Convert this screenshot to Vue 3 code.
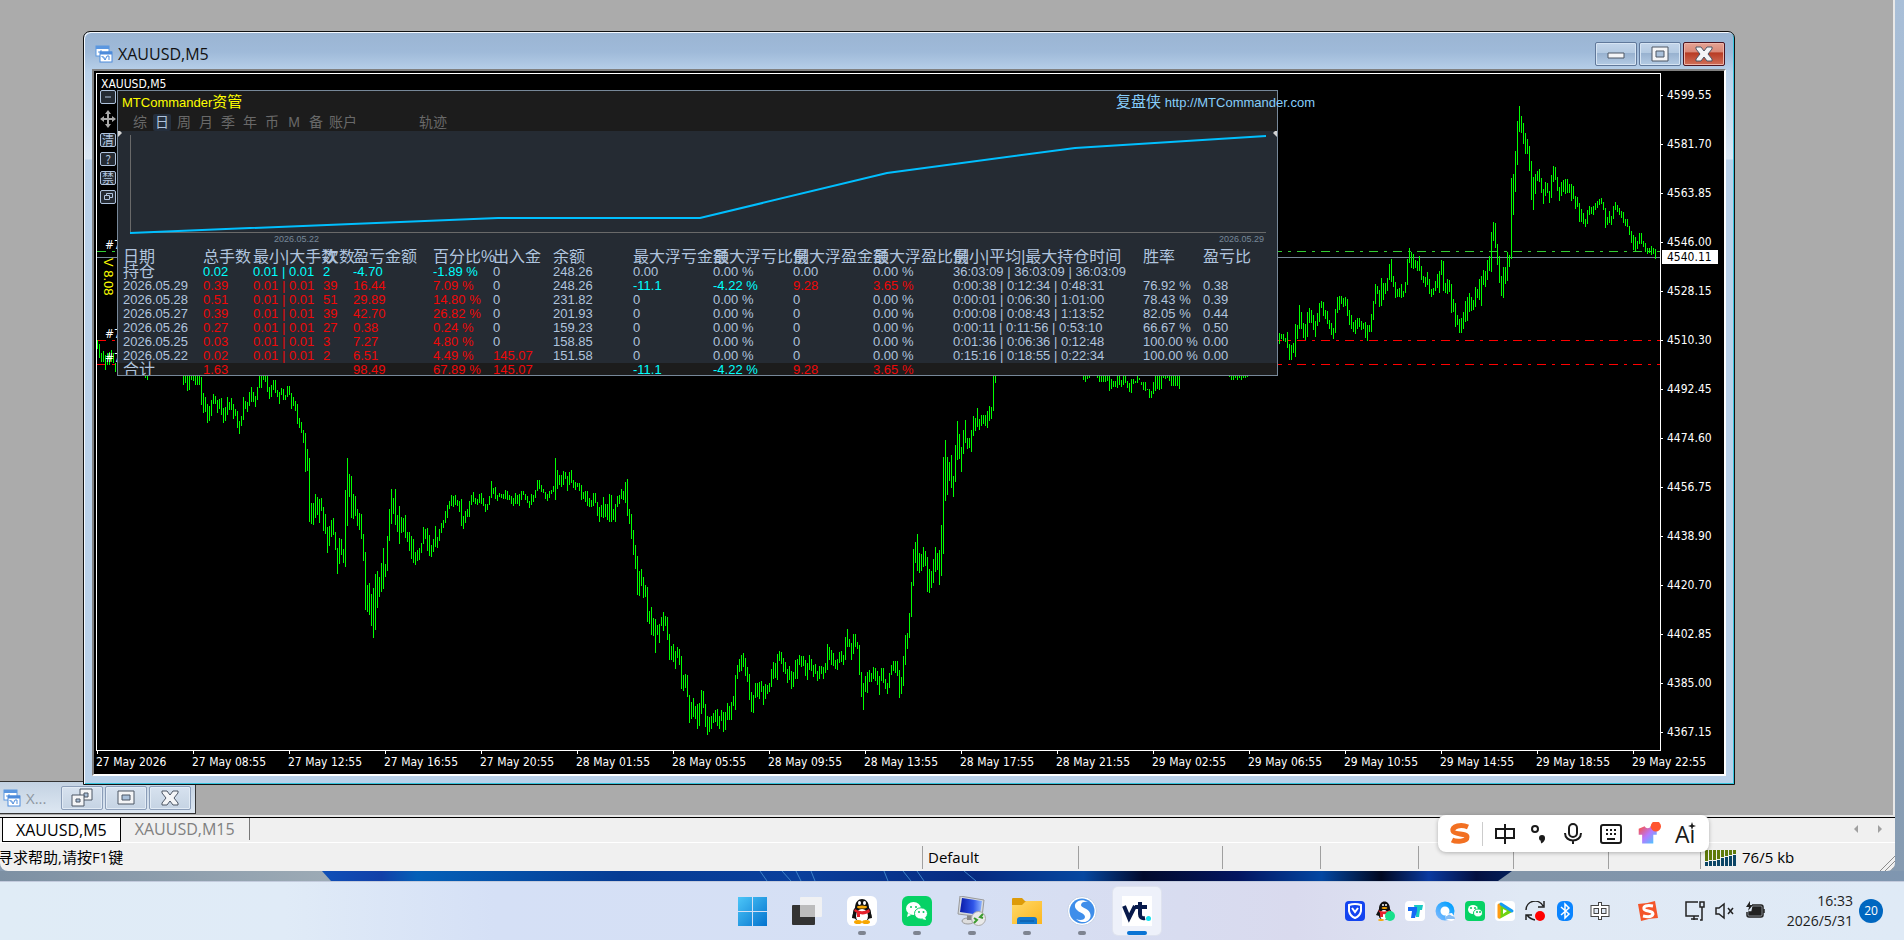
<script setup>
/* Bars are high/low pairs, one bar every two pixels, three units to a pixel measured down from "base". */
const series = [
  { x: 97, base: 25, bars: '945-972 958-1000 985-1010 978-1010 990-1036 985-1020 980-1020 975-1012 985-1015 1015-1040' },
  { x: 145, base: 370, bars: '15-24 15-30' },
  { x: 183, base: 370, bars: `15-44 15-38 15-62 15-60 15-30 15-32 15-44 15-44 15-44 22-104 68-128 82-126 102-158 108-152 90-138 72-102 78-102 90-128 87-116 84-134
114-158 112-154 82-134 96-120 84-120 102-146 116-138 122-174 152-191 138-168 82-150 93-116 96-126 66-108 52-96 66-96 78-110 52-90 15-54 15-54
15-30 15-36 15-66 50-86 44-80 30-60 30-68 60-80 66-102 54-74 57-90 75-90 48-80 48-74 68-116 82-108 93-122 102-161 144-174 156-188
180-218 190-306 237-303 264-456 399-461 399-465 372-444 380-435 388-459 384-423 411-483 432-492 471-549 468-528 450-501 444-495 486-540 534-612 504-582 507-555
537-579 360-591 264-468 312-381 318-444 372-447 378-438 417-468 429-480 432-507 492-573 546-720 645-726 639-735 672-768 654-804 612-780 603-714 621-681 579-666
534-657 582-621 498-603 417-513 357-462 384-432 357-465 435-486 408-522 441-489 444-486 435-504 486-516 486-543 498-567 507-579 546-585 540-573 534-570 519-549
471-522 477-507 474-543 495-558 525-561 507-546 468-531 501-534 477-513 459-489 450-474 423-459 405-444 393-417 375-408 378-411 375-405 390-408 393-426 387-468
438-477 423-459 417-441 393-441 375-405 366-396 384-402 387-405 372-399 369-402 384-408 402-426 402-420 378-405 333-384 354-372 351-387 375-393 369-381 372-384
372-387 360-387 363-390 375-390 378-402 384-408 369-402 375-402 372-408 363-390 363-375 372-390 378-399 393-414 372-405 375-396 360-384 330-363 330-357 345-366
357-369 366-387 372-393 363-384 360-372 348-366 264-390 300-357 315-345 315-351 303-345 306-327 318-363 306-345 300-339 330-354 336-360 339-351 339-363 345-390
366-387 363-396 363-408 384-411 390-411 369-408 369-399 396-438 411-456 405-441 381-444 402-441 402-450 372-456 375-456 417-450 402-456 378-411 375-402 357-387
363-390 336-399 327-438 417-462 432-507 480-555 525-597 558-675 603-678 597-648 621-684 645-681 651-756 723-762 711-795 744-798 747-849 765-795 762-819 741-768
726-783 738-768 741-810 792-870 828-870 822-876 843-897 831-864 837-885 858-957 915-963 912-954 915-981 975-1059` },
  { x: 691, base: 370, bars: `996-1047 984-1041 1008-1047 1002-1077 999-1068 960-1032 963-1014 1002-1071 1038-1095 1041-1086 1038-1077 1029-1059 1020-1056 1017-1068 1038-1077 1020-1053 1026-1086 1026-1080 999-1050 1008-1050
996-1050 978-1008 915-1020 885-927 867-906 855-903 849-891 864-918 891-936 912-990 966-1026 975-1029 939-984 939-981 936-987 933-966 948-1005 942-987 945-972 939-966
897-951 876-927 879-924 852-930 843-873 846-882 864-906 876-912 897-939 888-930 903-957 906-951 870-927 867-927 855-885 858-891 858-888 870-918 879-930 855-900
867-903 885-921 882-912 903-933 888-927 888-912 891-927 879-909 822-900 831-870 840-885 849-888 870-897 867-900 846-879 843-876 855-885 801-870 777-831 807-831
819-870 792-852 792-831 816-837 825-915 906-981 939-1020 918-966 906-969 900-936 909-936 891-927 894-933 903-945 918-975 894-933 894-939 927-957 939-972 909-954
885-915 873-903 873-909 873-918 900-984 921-972 858-948 795-885 789-837 729-804 636-741 537-648 516-579 492-603 549-609 552-603 531-591 543-588 561-666 597-669
603-654 567-639 531-606 549-600 540-645 465-618 261-552 210-393 261-375 276-333 255-354 318-381 225-336 153-270 192-267 231-306 180-252 150-219 204-237 204-234
180-246 138-198 144-183 114-171 147-180 135-168 135-162 135-168 123-174 108-153 111-147 15-123 15-39` },
  { x: 1083, base: 370, bars: '15-30 15-36 15-27 15-24' },
  { x: 1097, base: 370, bars: `15-24 15-36 15-36 15-36 15-36 15-32 15-63 28-57 32-52 32-51 15-54 15-45 30-51 15-45 18-39 33-54 39-66 27-69 27-42 32-39
15-39 24-30 36-45 36-60 36-63 57-60 57-84 63-84 36-72 15-63 15-57 15-60 15-57 15-24 15-27 15-24 15-33 15-48 15-48 15-48 15-48 15-57` },
  { x: 1229, base: 370, bars: '15-21 15-29 15-30 15-24 15-30 15-24 15-30 15-24 15-24 15-21' },
  { x: 1279, base: 25, bars: `924-957 927-942 927-948 939-951 921-969 957-1005 960-1005 954-984 897-996 900-942 840-912 861-912 894-939 897-945 861-936 849-894 855-894 870-915 888-936 864-903
834-891 828-849 831-873 855-882 858-897 885-912 894-930 909-942 852-924 816-864 813-855 813-837 819-846 816-843 822-873 855-900 870-912 891-921 885-927 879-912
879-906 888-915 894-912 891-939 900-948 900-921 867-921 828-885 777-837 783-807 795-846 759-843 774-825 774-807 759-798 717-765 702-771 753-786 771-819 792-816
789-816 777-819 798-816 771-804 702-780 669-714 681-729 687-732 705-729 708-738 693-738 723-765 753-774 756-786 741-780 762-807 792-816 789-810 768-798 747-789
738-804 705-750 708-798 774-804 762-807 765-801 777-864 822-861 834-906 870-900 882-924 879-924 861-912 828-891 816-888 804-861 816-858 825-855 786-846 792-819
762-825 753-843 735-780 738-786 705-765 693-738 621-741 591-648 594-669 657-720 693-774 753-813 726-819 726-777 681-768 690-726 459-702 447-570 378-501 288-420
243-321 273-324 294-357 324-387 342-387 363-438 408-525 456-555 447-507 438-468 432-471 459-504 492-537 471-513 474-504 498-534 450-519 423-471 426-465 456-498
486-528 471-513 465-501 462-507 462-504 477-504 477-528 483-522 513-552 516-546 534-591 552-591 564-597 582-606 555-597 543-570 546-567 543-570 534-555 528-549
522-540 519-537 531-555 549-609 576-600 558-594 573-600 543-582 531-555 540-561 549-570 558-579 561-594 582-603 582-606 603-630 618-654 630-675 636-678 648-672
624-657 624-657 648-666 654-681 669-687 669-684 663-690 669-687 672-702` },
]
const barPath = series
  .map((s) =>
    s.bars
      .split(/\s+/)
      .map((b, i) => {
        const [hi, lo] = b.split('-').map((v) => s.base + Math.round(v / 3))
        return `M${s.x + i * 2} ${hi}h1V${lo}h-1z`
      })
      .join('')
  )
  .join('')

const prices = ['4599.55', '4581.70', '4563.85', '4546.00', '4528.15', '4510.30', '4492.45', '4474.60', '4456.75', '4438.90', '4420.70', '4402.85', '4385.00', '4367.15']
const times = ['27 May 2026', '27 May 08:55', '27 May 12:55', '27 May 16:55', '27 May 20:55', '28 May 01:55', '28 May 05:55', '28 May 09:55', '28 May 13:55', '28 May 17:55', '28 May 21:55', '29 May 02:55', '29 May 06:55', '29 May 10:55', '29 May 14:55', '29 May 18:55', '29 May 22:55']

const periods = ['综', '日', '周', '月', '季', '年', '币', 'M', '备', '账户']
const heads = ['日期', '总手数', '最小|大手数', '次数', '盈亏金额', '百分比%', '出入金', '余额', '最大浮亏金额', '最大浮亏比例', '最大浮盈金额', '最大浮盈比例', '最小|平均|最大持仓时间', '胜率', '盈亏比']
const rows = [
  ['持仓', 'c0.02', 'c0.01 | 0.01', 'c2', 'c-4.70', 'c-1.89 %', '0', '248.26', '0.00', '0.00 %', '0.00', '0.00 %', '36:03:09 | 36:03:09 | 36:03:09', '', ''],
  ['2026.05.29', 'r0.39', 'r0.01 | 0.01', 'r39', 'r16.44', 'r7.09 %', '0', '248.26', 'c-11.1', 'c-4.22 %', 'r9.28', 'r3.65 %', '0:00:38 | 0:12:34 | 0:48:31', '76.92 %', '0.38'],
  ['2026.05.28', 'r0.51', 'r0.01 | 0.01', 'r51', 'r29.89', 'r14.80 %', '0', '231.82', '0', '0.00 %', '0', '0.00 %', '0:00:01 | 0:06:30 | 1:01:00', '78.43 %', '0.39'],
  ['2026.05.27', 'r0.39', 'r0.01 | 0.01', 'r39', 'r42.70', 'r26.82 %', '0', '201.93', '0', '0.00 %', '0', '0.00 %', '0:00:08 | 0:08:43 | 1:13:52', '82.05 %', '0.44'],
  ['2026.05.26', 'r0.27', 'r0.01 | 0.01', 'r27', 'r0.38', 'r0.24 %', '0', '159.23', '0', '0.00 %', '0', '0.00 %', '0:00:11 | 0:11:56 | 0:53:10', '66.67 %', '0.50'],
  ['2026.05.25', 'r0.03', 'r0.01 | 0.01', 'r3', 'r7.27', 'r4.80 %', '0', '158.85', '0', '0.00 %', '0', '0.00 %', '0:01:36 | 0:06:36 | 0:12:48', '100.00 %', '0.00'],
  ['2026.05.22', 'r0.02', 'r0.01 | 0.01', 'r2', 'r6.51', 'r4.49 %', 'r145.07', '151.58', '0', '0.00 %', '0', '0.00 %', '0:15:16 | 0:18:55 | 0:22:34', '100.00 %', '0.00'],
]
const totals = ['合计', 'r1.63', '', '', 'r98.49', 'r67.89 %', 'r145.07', '', 'c-11.1', 'c-4.22 %', 'r9.28', 'r3.65 %', '', '', '']
const tone = (v) => ({ up: v[0] === 'r', down: v[0] === 'c' })
const plain = (v) => v.replace(/^[rc]/, '')
const signal = [11, 10, 10, 9, 7, 6, 5, 4]
</script>

<template>
  <div class="desktop">
    <main class="app">
      <section class="workspace">
        <div class="mini">
          <svg class="app-icon" viewBox="0 0 18 18"><rect x="1" y="1" width="13" height="10" fill="#fff" stroke="#5b97e0" /><path d="M1 2.500h13" stroke="#5b97e0" stroke-width="3" /><path d="M3 7h3V5M9 8h2" stroke="#5b97e0" fill="none" /><rect x="5" y="7" width="12" height="10" fill="#fff" stroke="#4d8bdb" /><path d="M5 8h12" stroke="#4d8bdb" stroke-width="3" /><path d="M7 11v1h2v2h1v1l2-4h2v4" stroke="#4d8bdb" fill="none" /></svg>
          <span class="mini-title">X...</span>
          <div class="wbtns">
            <button class="wbtn pale" aria-label="还原"><svg viewBox="0 0 24 20"><path d="M10 1h12v11H10z" class="glyph" /><path d="M14 5h4v4h-4z" class="hole" /><path d="M2 7h12v11H2z" class="glyph" /><path d="M6 11h4v3H6z" class="hole" /></svg></button>
            <button class="wbtn pale" aria-label="最大化"><svg viewBox="0 0 24 20"><path d="M4 3h16v13H4z" class="glyph" /><path d="M8 7h8v5H8z" class="hole" /></svg></button>
            <button class="wbtn pale" aria-label="关闭"><svg viewBox="0 0 24 20"><path d="M4 3h5l3 4 3-4h5v2l-4 5 4 5v2h-5l-3-4-3 4H4v-2l4-5-4-5z" class="glyph" /></svg></button>
          </div>
        </div>

        <article class="child">
          <header class="titlebar">
            <svg class="app-icon" viewBox="0 0 18 18"><rect x="1" y="1" width="13" height="10" fill="#fff" stroke="#5b97e0" /><path d="M1 2.500h13" stroke="#5b97e0" stroke-width="3" /><path d="M3 7h3V5M9 8h2" stroke="#5b97e0" fill="none" /><rect x="5" y="7" width="12" height="10" fill="#fff" stroke="#4d8bdb" /><path d="M5 8h12" stroke="#4d8bdb" stroke-width="3" /><path d="M7 11v1h2v2h1v1l2-4h2v4" stroke="#4d8bdb" fill="none" /></svg>
            <h1>XAUUSD,M5</h1>
            <div class="wbtns">
              <button class="wbtn" aria-label="最小化"><svg viewBox="0 0 24 20"><path d="M4 9h16v5H4z" class="glyph" /></svg></button>
              <button class="wbtn" aria-label="最大化"><svg viewBox="0 0 24 20"><path d="M4 3h16v14H4z" class="glyph" /><path d="M8 7h8v6H8z" class="hole" /></svg></button>
              <button class="wbtn close" aria-label="关闭"><svg viewBox="0 0 24 20"><path d="M4 3h5l3 4 3-4h5v2l-4 5 4 5v2h-5l-3-4-3 4H4v-2l4-5-4-5z" class="glyph" /></svg></button>
            </div>
          </header>

          <div class="chart">
            <div class="plot">
              <svg class="bars" viewBox="97 74 1563 676" preserveAspectRatio="none" shape-rendering="crispEdges">
                <path d="M97 257h1563v1H97z" fill="#778899" />
                <path d="M97 251.500h1563" class="dash buy" />
                <path d="M97 340.500h1563M97 364.500h1563" class="dash stop" />
                <path :d="barPath" fill="#00ff00" />
              </svg>
              <span class="symbol">XAUUSD,M5</span>
              <span class="order o1">#7</span>
              <span class="order o2">#7</span>
              <span class="order o3">#7</span>
              <span class="version">V 8.08</span>

              <div class="tools">
                <button class="tool" aria-label="收起"><svg viewBox="0 0 14 12"><path d="M4 6h6" stroke="#b0c4de" /></svg></button>
                <button class="tool move" aria-label="移动"><svg viewBox="0 0 16 18"><path d="M8 2v14M1 9h14" stroke="#a9a9a9" stroke-width="2" /><path d="M8 0l3 4H5zM8 18l3-4H5zM0 9l4-3v6zM16 9l-4-3v6z" fill="#a9a9a9" /></svg></button>
                <button class="tool">清</button>
                <button class="tool">?</button>
                <button class="tool">禁</button>
                <button class="tool" aria-label="窗口"><svg viewBox="0 0 14 12" fill="none" stroke="#b0c4de"><path d="M5.500 4V2.500h6v4H9M3.500 4.500h5v4h-5z" /></svg></button>
              </div>

              <section class="panel">
                <div class="panel-head">
                  <div class="brand-row">
                    <strong>MTCommander<span class="cjk">资管</span></strong>
                    <a href="http://MTCommander.com"><span class="cjk">复盘侠</span> http://MTCommander.com</a>
                  </div>
                  <nav class="periods">
                    <button v-for="p in periods" :key="p" :class="{ on: p === '日' }">{{ p }}</button>
                    <button class="track">轨迹</button>
                  </nav>
                </div>
                <svg class="equity" viewBox="118 131 1159 105" preserveAspectRatio="none">
                  <path d="M130 135h1v98h-1zM130 232h1136v1H130z" fill="#696969" shape-rendering="crispEdges" />
                  <path d="M130 233L498 218H700L887 173L1075 148L1266 136" fill="none" stroke="#00bfff" stroke-width="2" />
                  <path d="M118 129l4 4-4 4zM1277 129l-4 4 4 4z" fill="#d3d3d3" />
                </svg>
                <div class="dates"><span>2026.05.22</span><span>2026.05.29</span></div>
                <div class="grid">
                  <table>
                    <colgroup><col v-for="n in 15" :key="n" :class="'c' + n" /></colgroup>
                    <thead><tr><th v-for="h in heads" :key="h">{{ h }}</th></tr></thead>
                    <tbody><tr v-for="r in rows" :key="r[0]"><td v-for="(v, i) in r" :key="i" :class="tone(v)">{{ plain(v) }}</td></tr></tbody>
                    <tfoot><tr><td v-for="(v, i) in totals" :key="i" :class="tone(v)">{{ plain(v) }}</td></tr></tfoot>
                  </table>
                </div>
              </section>
            </div>
            <div class="prices"><span v-for="p in prices" :key="p">{{ p }}</span></div>
            <div class="times"><span v-for="t in times" :key="t">{{ t }}</span></div>
            <span class="current">4540.11</span>
          </div>
        </article>
      </section>

      <nav class="tabs">
        <button class="tab on">XAUUSD,M5</button>
        <button class="tab">XAUUSD,M15</button>
        <span class="arrows"><button aria-label="向左"><svg viewBox="0 0 6 10"><path d="M5 1v8L1 5z" fill="#a0a0a0" /></svg></button><button aria-label="向右"><svg viewBox="0 0 6 10"><path d="M1 1v8l4-4z" fill="#a0a0a0" /></svg></button></span>
      </nav>

      <footer class="status">
        <span class="help">寻求帮助,请按F1键</span>
        <span class="s1">Default</span><span class="s2"></span><span class="s3"></span><span class="s3"></span><span class="s4"></span><span class="s4"></span><span class="s5"></span>
        <span class="net">
          <svg class="signal" viewBox="0 0 32 16" shape-rendering="crispEdges"><template v-for="(g, i) in signal" :key="i"><rect :x="i * 4" y="0" width="3" :height="g" fill="#5f7a0b" /><rect :x="i * 4" :y="g + 1" width="3" :height="15 - g" fill="#0b4566" /></template></svg>
          76/5 kb
        </span>
        <svg class="grip" viewBox="0 0 16 16" stroke="#8c8c8c"><path d="M1 16L16 1M6 16L16 6M11 16l5-5" /></svg>
      </footer>
    </main>

    <div class="ime">
      <svg class="ime-s" viewBox="0 0 24 22"><path d="M20 4C13 1 4 3 5 8c1 4 14 2 14 6 0 5-11 5-15 3" fill="none" stroke="#f27022" stroke-width="5" /></svg>
      <i></i>
      <svg viewBox="0 0 24 24" class="pen"><path d="M3 7h18v9H3zM12 2v20" /></svg>
      <svg viewBox="0 0 24 24" class="pen punct"><circle cx="8" cy="7" r="3" /><circle cx="15" cy="16" r="2" fill="#1a1a1a" /><path d="M16.500 16c.5 2-.5 3.500-2.500 4.500" /></svg>
      <svg viewBox="0 0 24 24" class="pen"><rect x="8" y="2" width="8" height="13" rx="4" /><path d="M4 11c0 10 16 10 16 0M12 19v3" /></svg>
      <svg viewBox="0 0 24 24" class="pen wide"><rect x="2" y="3" width="20" height="18" rx="2" /><path d="M7 8h2M11 8h2M15 8h2M7 12h2M11 12h2M15 12h2M8 17h8" /></svg>
      <svg viewBox="0 0 28 28" class="wide"><defs><linearGradient id="shirt" x1="0" y1="0" x2="1" y2="1"><stop offset="0" stop-color="#ff4f3a" /><stop offset=".5" stop-color="#b678ff" /><stop offset="1" stop-color="#35d6ff" /></linearGradient></defs><path d="M2 8l7-3c1 3 6 3 7 0l7 3v7h-4v10H6V15H2z" fill="url(#shirt)" /><circle cx="22" cy="5" r="6" fill="#ff5530" /></svg>
      <span class="ai wide">Ai<svg viewBox="0 0 8 8"><path d="M4 0l1 3 3 1-3 1-1 3-1-3-3-1 3-1z" fill="#1a1a1a" /></svg></span>
    </div>

    <svg class="wallpaper" viewBox="0 0 1904 10" preserveAspectRatio="none">
      <defs>
        <linearGradient id="blue"><stop offset="0" stop-color="#0f50b8" /><stop offset=".05" stop-color="#1240a8" /><stop offset=".08" stop-color="#0460b8" /><stop offset=".25" stop-color="#063c94" /><stop offset=".4" stop-color="#0a3f9c" /><stop offset=".55" stop-color="#062a80" /><stop offset=".64" stop-color="#0648a0" /><stop offset=".69" stop-color="#020a2c" /><stop offset=".77" stop-color="#031560" /><stop offset=".84" stop-color="#0347a2" /><stop offset=".89" stop-color="#010820" /><stop offset=".93" stop-color="#0a3aa0" /><stop offset=".97" stop-color="#041040" /><stop offset="1" stop-color="#031f5a" /></linearGradient>
        <linearGradient id="sky"><stop offset="0" stop-color="#7d90a3" /><stop offset=".17" stop-color="#9caab5" /><stop offset=".8" stop-color="#8295a9" /><stop offset="1" stop-color="#7f96b0" /></linearGradient>
      </defs>
      <path d="M0 0h1904v10H0z" fill="url(#sky)" />
      <path d="M322 0H1512L1498 10H331z" fill="url(#blue)" />
      <path d="M760 0l7 10M782 0l9 10M796 0l5 10M811 0l4 10M884 0l4 10M903 0l8 10M917 0l7 10M964 0l12 10" stroke="#3f83c8" fill="none" />
    </svg>

    <div class="taskbar">
      <div class="pinned">
        <button aria-label="开始"><svg viewBox="0 0 30 30"><defs><linearGradient id="win" x1="0" y1="0" x2="1" y2="1"><stop offset="0" stop-color="#4cc6f8" /><stop offset="1" stop-color="#0473ce" /></linearGradient></defs><path d="M1 1h14v14H1zM16 1h14v14H16zM1 16h14v14H1zM16 16h14v14H16z" fill="url(#win)" /></svg></button>
        <button aria-label="任务视图"><svg viewBox="0 0 30 30"><rect x="0" y="9" width="23" height="20" rx="1" fill="#333" /><rect x="8" y="1" width="22" height="20" rx="1" fill="#f3f3f3" opacity=".9" /><path d="M8 9h15v12H8z" fill="#bcbcbc" /></svg></button>
        <button class="run" aria-label="QQ"><svg viewBox="0 0 30 30"><rect width="30" height="30" rx="6" fill="#fff" /><ellipse cx="15" cy="17" rx="9" ry="9" fill="#111" /><path d="M8 12C8 0 22 0 22 12v4H8z" fill="#111" /><path d="M5 22c0-4 2-7 3-8l2 9zM25 22c0-4-2-7-3-8l-2 9z" fill="#111" /><ellipse cx="15" cy="20" rx="6" ry="7" fill="#fff" /><ellipse cx="11" cy="26" rx="4" ry="2" fill="#f7a600" /><ellipse cx="19" cy="26" rx="4" ry="2" fill="#f7a600" /><path d="M8 13c5 3 9 3 14 0l1 3c-3 2-7 3-10 2v3h-3v-4l-3-2z" fill="#e6212c" /><ellipse cx="12.500" cy="7" rx="1.500" ry="2" fill="#fff" /><ellipse cx="17.500" cy="7" rx="1.500" ry="2" fill="#fff" /><ellipse cx="15" cy="11" rx="5" ry="1.500" fill="#f7a600" /></svg></button>
        <button class="run" aria-label="微信"><svg viewBox="0 0 30 30"><rect width="30" height="30" rx="6" fill="#06d265" /><ellipse cx="11.500" cy="12.500" rx="7.500" ry="6.500" fill="#fff" /><path d="M6 17l-1 4 4-2z" fill="#fff" /><ellipse cx="19" cy="17.500" rx="6.500" ry="5.700" fill="#fff" stroke="#06d265" /><path d="M23 21l1 3-4-1z" fill="#fff" /><g fill="#06c75f"><circle cx="9" cy="11" r="1" /><circle cx="14" cy="11" r="1" /><circle cx="17" cy="16" r="1" /><circle cx="21.500" cy="16" r="1" /></g></svg></button>
        <button class="run" aria-label="远程桌面"><svg viewBox="0 0 30 30"><defs><linearGradient id="mon" x1="0" x2="1"><stop offset="0" stop-color="#0a1ba8" /><stop offset=".6" stop-color="#2f55e8" /><stop offset="1" stop-color="#8db4ff" /></linearGradient></defs><ellipse cx="11" cy="25" rx="6" ry="3" fill="#ddd" stroke="#999" /><path d="M10 18h5v6h-5z" fill="#888" /><path d="M3 0l24 4-2 17L1 18z" fill="#d5d9de" stroke="#999" /><path d="M5 2l20 3-2 14L3 16z" fill="url(#mon)" /><circle cx="21.500" cy="22.500" r="7" fill="#e9e9e9" stroke="#aaa" /><path d="M17 22l3 2-3 3M26 18l-3 3 3 1" stroke="#3b9b2f" stroke-width="2" fill="none" /></svg></button>
        <button class="run" aria-label="文件资源管理器"><svg viewBox="0 0 30 30"><defs><linearGradient id="fold" x1="0" y1="0" x2="1" y2="1"><stop offset="0" stop-color="#ffd968" /><stop offset="1" stop-color="#fcb61f" /></linearGradient></defs><path d="M0 3c0-1 1-1 1-1h9l3 3h17v8H0z" fill="#dd9b09" /><path d="M0 9h10l4-4h16v23H0z" fill="url(#fold)" /><path d="M5 28v-4q0-3 3-3h14q3 0 3 3v4z" fill="#1379cf" /><path d="M8 25h14" stroke="#0a549d" /></svg></button>
        <button class="run" aria-label="搜狗浏览器"><svg viewBox="0 0 30 30"><circle cx="15" cy="15" r="14.500" fill="#fff" stroke="#c9d3e6" /><circle cx="15" cy="15" r="12.500" fill="#3f8eea" /><path d="M21 6C13 1 5 7 9 13c3 4 9 4 9 8 0 3-5 4-9 2 8 7 17 1 14-6-2-5-9-5-9-8 0-3 4-4 7-3z" fill="#fff" /></svg></button>
        <button class="run on" aria-label="vt"><svg viewBox="0 0 30 30"><rect width="30" height="30" fill="#fff" /><path d="M2 10l5 12 6-12" fill="none" stroke="#081a4b" stroke-width="4" /><path d="M18 6v12q0 5 5 4M13 11h12" fill="none" stroke="#081a4b" stroke-width="4" /><circle cx="26.500" cy="22.500" r="2.500" fill="#16e0ee" /></svg></button>
      </div>

      <div class="tray">
        <svg viewBox="0 0 20 20"><rect width="20" height="20" rx="4" fill="#1444f0" /><path d="M4 4q6-2 12 0v6q-1 5-6 7-5-2-6-7z" fill="none" stroke="#fff" stroke-width="2" /><path d="M7 7l3 4 3-4" fill="none" stroke="#fff" stroke-width="2" /></svg>
        <svg viewBox="0 0 20 20"><path d="M4 8C4-2 15-2 15 8l3 6-3 1c0 5-11 5-11 0l-3-1z" fill="#111" /><ellipse cx="9" cy="14" rx="4" ry="5" fill="#fff" /><ellipse cx="6" cy="19" rx="3" ry="1" fill="#f7a600" /><path d="M3 9c4 2 8 2 12 0v3q-5 2-7 1v3H5v-4z" fill="#e6212c" /><circle cx="8" cy="4" r="1" fill="#fff" /><circle cx="11" cy="4" r="1" fill="#fff" /><ellipse cx="9.500" cy="7" rx="3" ry="1" fill="#f7a600" /><circle cx="15" cy="15" r="5" fill="#17e08b" /></svg>
        <svg viewBox="0 0 20 20"><rect width="20" height="20" rx="4" fill="#fff" /><path d="M9 4h9l-1 5h-2l-1 7h-3z" fill="#17c9c4" /><path d="M3 6h9v4l-2 7H6l1-7H3z" fill="#1668f5" /></svg>
        <svg viewBox="0 0 20 20"><defs><linearGradient id="ring" x1="0" y1="1" x2="1" y2="0"><stop offset="0" stop-color="#74b7ff" /><stop offset="1" stop-color="#00a0ff" /></linearGradient></defs><circle cx="10" cy="10" r="7" fill="#fff" stroke="url(#ring)" stroke-width="5" /><path d="M11 13l6-1 3 5q-1 3-4 3l-6-2z" fill="#fff" /><path d="M12 15q2-3 5 0 3 0 3 3H10q0-3 2-3z" fill="#85bdf5" /></svg>
        <svg viewBox="0 0 20 20"><rect width="20" height="20" rx="4" fill="#06d265" /><ellipse cx="8" cy="8.500" rx="5" ry="4.500" fill="#fff" /><ellipse cx="13" cy="12" rx="4.500" ry="4" fill="#fff" stroke="#06d265" /><g fill="#06c75f"><circle cx="6" cy="7" r="1" /><circle cx="10" cy="7" r="1" /><circle cx="12" cy="11" r="1" /><circle cx="15" cy="11" r="1" /></g></svg>
        <svg viewBox="0 0 20 20"><rect width="20" height="20" rx="4" fill="#fff" /><path d="M5 4l11 6-11 6z" fill="#6fd313" stroke="#6fd313" stroke-width="3" stroke-linejoin="round" /><path d="M4 4v12" stroke="#ff9b12" stroke-width="3" stroke-linecap="round" /><path d="M6 3l11 7" stroke="#159cf5" stroke-width="3" stroke-linecap="round" /><path d="M8 8l4 2-4 3z" fill="#fff" /></svg>
        <svg viewBox="0 0 20 20" class="thin"><path d="M1 9A9 9 0 0 1 18 5M19 0v6h-6M1 19v-5h6M2 14q3 4 8 5" /><circle cx="15" cy="15" r="5" fill="#f00" stroke="none" /></svg>
        <svg viewBox="0 0 20 20"><rect x="2" width="16" height="20" rx="6" fill="#0a84ff" /><path d="M6 6l8 7-4 4V3l4 4-8 7" fill="none" stroke="#fff" stroke-width="1.500" /></svg>
        <svg viewBox="0 0 20 20" class="zh"><path d="M2.500 6h15v8h-15zM10 1v18" stroke="#444" stroke-width="4" /><path d="M2.500 6h15v8h-15zM10 2v16" stroke="#fff" stroke-width="2" /></svg>
        <svg viewBox="0 0 20 20" class="sogou"><path d="M0 3q8 0 17-3l3 17q-8 0-17 3z" fill="#f4552a" /><path d="M15 5C9 4 5 5 6 8s9 1 9 5c-1 3-6 3-10 2" fill="none" stroke="#fff" stroke-width="3" /></svg>
        <svg viewBox="0 0 20 20" class="thin net-icon"><path d="M13 1H1v14h13M6 18h7M9 15v4M15 1h4v5h-4zM17 6v13h-2" /></svg>
        <svg viewBox="0 0 20 20" class="thin snd"><path d="M1 7h3l5-4v14l-5-4H1zM13 7l5 6M18 7l-5 6" /></svg>
        <svg viewBox="0 0 20 20" class="thin bat"><path d="M7 4h9q2 0 2 2v8q0 2-2 2H4q-2 0-2-2v-3" /><path d="M8 6h8v8H4v-3h3z" fill="#222" /><path d="M19 8v4" /><path d="M5 0L1 6h3l-1 4 5-6H5z" fill="#222" stroke="none" /></svg>
        <div class="clock"><span>16:33</span><span>2026/5/31</span></div>
        <span class="badge">20</span>
      </div>
    </div>
  </div>
</template>

<style>
body { margin: 0; overflow: hidden; }
</style>

<style scoped>
* { box-sizing: border-box; }
button { font: inherit; color: inherit; padding: 0; border: 0; background: none; }
svg { display: block; flex: none; }
.desktop { position: relative; display: flex; flex-direction: column; height: 100vh; background: linear-gradient(#a9bfd8, #8398ae); font-family: "Open Sans", "Noto Sans CJK SC", sans-serif; font-size: 15px; color: #000; }
.app { flex: 1; min-height: 0; display: flex; flex-direction: column; margin-right: 9px; background: #f0f0f0; border-radius: 0 0 8px 8px; overflow: hidden; }
.workspace { position: relative; flex: 1; min-height: 0; background: #ababab; border-right: 2px solid #e8e8e8; }

.child { position: absolute; left: 83px; top: 31px; right: 158px; bottom: 32px; display: flex; flex-direction: column; padding: 0 8px 8px; border: 1px solid #111; border-radius: 7px 7px 0 0; background: linear-gradient(#9ab4d2 0, #9fbad9 20px, #b9d1ea 40px, #dae7f4 127px, #b9d1ea 128px); box-shadow: inset 1px 1px 0 #f4f9ff, inset -1px -1px 0 #35c5de; }
.titlebar { flex: none; display: flex; align-items: center; height: 37px; padding: 0 1px 0 3px; }
.app-icon { width: 18px; height: 18px; }
h1 { margin: 0 0 0 5px; font-size: 16px; line-height: 20px; font-weight: 400; color: #111; }
.titlebar h1 { padding-top: 6px; }
.titlebar .app-icon { margin-top: 6px; }
.wbtns { display: flex; gap: 2px; margin-left: auto; }
.wbtn { display: flex; align-items: center; justify-content: center; width: 42px; height: 24px; border: 1px solid #60789a; border-radius: 2px; background: linear-gradient(#c3d5ea 0, #b3c9e1 45%, #97b1cf 46%, #b4cbe4 100%); box-shadow: inset 0 0 0 1px #d6e4f3; }
.titlebar .wbtn { margin-top: 6px; }
.wbtn svg { width: 24px; height: 20px; }
.wbtn.close { border-color: #4d1520; background: linear-gradient(#e5a394 0, #d98877 42%, #b73a22 44%, #d0705a 100%); box-shadow: inset 0 0 0 1px #eeb4a8; }
.wbtn.pale { border-color: #8b9db8; background: linear-gradient(#d7e2ef, #c5d3e3); box-shadow: inset 0 0 0 1px #e2ebf5; }
.glyph { fill: #f4f5f7; stroke: #4d5665; }
.hole { fill: #a9c0da; stroke: #4d5665; }

.mini { position: absolute; left: 0; bottom: 3px; display: flex; align-items: center; width: 196px; height: 33px; padding: 0 4px 0 3px; background: linear-gradient(#c3d2e2, #dde7f2); border: solid #333; border-width: 1px 1px 1px 0; }
.mini-title { margin-left: 5px; font-size: 15px; color: #8d969f; }

.chart { position: relative; flex: 1; min-height: 0; display: grid; grid-template-columns: minmax(0, 1fr) 63px; grid-template-rows: minmax(0, 1fr) 23px; padding: 2px 0 0 2px; border: 2px solid; border-color: #808080 #fff #fff #808080; background: #000; color: #fff; font-family: "DejaVu Sans Condensed", "Noto Sans", sans-serif; font-size: 12px; }
.plot { position: relative; border: 1px solid #fff; }
.bars { width: 100%; height: 100%; }
.dash { fill: none; stroke-width: 1; stroke-dasharray: 9 6 3 6; }
.buy { stroke: #32cd32; }
.stop { stroke: #f00; }
.symbol { position: absolute; left: 4px; top: 2px; line-height: 16px; }
.order { position: absolute; left: 8px; line-height: 16px; }
.o1 { top: 163px; }
.o2 { top: 252px; }
.o3 { top: 276px; }
.version { position: absolute; left: 4px; top: 184px; writing-mode: vertical-rl; line-height: 14px; font-family: "Liberation Sans", sans-serif; font-size: 13px; color: #ff0; }
.tools { position: absolute; left: 3px; top: 16px; display: flex; flex-direction: column; gap: 5px; }
.tool { display: flex; align-items: center; justify-content: center; width: 16px; height: 14px; border: 1px solid #b0c4de; border-radius: 2px; background: #252b33; color: #b0c4de; font: 12px/12px "Noto Sans CJK SC", sans-serif; }
.tool svg { width: 14px; height: 12px; }
.tool.move { height: 19px; border: 0; background: none; }
.tool.move svg { width: 16px; height: 18px; }

.prices { display: flex; flex-direction: column; gap: 33px; padding-top: 14px; }
.prices span { display: flex; align-items: center; gap: 4px; height: 16px; line-height: 16px; }
.prices span::before { content: ""; width: 2px; height: 1px; background: #fff; }
.current { position: absolute; right: 6px; top: 179px; width: 56px; padding-left: 5px; background: #fff; color: #000; line-height: 14px; }
.times { grid-column: 1 / 3; display: flex; }
.times span { position: relative; flex: 0 0 96px; white-space: nowrap; line-height: 23px; }
.times span::before { content: ""; position: absolute; left: 1px; top: 0; width: 1px; height: 3px; background: #fff; }

.panel { position: absolute; left: 20px; top: 16px; display: flex; flex-direction: column; width: 1161px; height: 286px; border: 1px solid #778899; background: #252b33; color: #b0c4de; font: 13px/14px "Liberation Sans", "Noto Sans CJK SC", sans-serif; }
.panel-head { flex: none; height: 40px; background: #1c1c1c; color: #696969; }
.brand-row { display: flex; justify-content: space-between; height: 23px; padding-left: 4px; line-height: 22px; white-space: nowrap; }
.brand-row strong { font-weight: 400; color: #ff0; }
.brand-row a { margin-right: -38px; color: #87cefa; text-decoration: none; }
.cjk { font-size: 15px; }
.periods { display: flex; gap: 4px; padding-left: 13px; height: 17px; }
.periods button { flex: none; min-width: 18px; height: 17px; border-radius: 2px; font: 14px/17px "Liberation Sans", "Noto Sans CJK SC", sans-serif; color: #696969; }
.periods .on { background: #252f3d; color: #b0c4de; }
.periods .track { margin-left: 58px; }
.equity { width: 100%; height: 105px; }
.dates { flex: none; display: flex; justify-content: space-between; height: 13px; padding: 0 13px 0 156px; font-size: 9px; line-height: 7px; color: #778899; }
.grid { flex: 1; min-height: 0; overflow: hidden; }
table { table-layout: fixed; width: 100%; border-collapse: collapse; }
th, td { height: 14px; padding: 0; font-weight: 400; text-align: left; line-height: 14px; white-space: nowrap; }
th { height: 16px; font-size: 16px; line-height: 16px; }
th:first-child, td:first-child { padding-left: 5px; }
tbody tr:first-child td:first-child, tfoot td:first-child { font-size: 16px; }
tfoot { background: #1c1c1c; }
.up { color: #ee0808; }
.down { color: #00ffff; }
.c1 { width: 85px; } .c2 { width: 50px; } .c3 { width: 70px; } .c4 { width: 30px; } .c5 { width: 80px; }
.c6, .c7, .c14 { width: 60px; }
.c8, .c9, .c10, .c11, .c12 { width: 80px; }
.c13 { width: 190px; }

.tabs { flex: none; display: flex; align-items: flex-start; height: 26px; padding: 0 12px 0 2px; border-top: 1px solid #000; border-bottom: 1px solid #fff; box-shadow: 0 -2px 0 #e8e8e8; position: relative; }
.tab { height: 22px; padding: 0 14px; font-size: 16px; line-height: 22px; color: #808080; border-right: 1px solid #777; }
.tab.on { height: 24px; padding: 0 13px; background: #fff; color: #000; border: solid #000; border-width: 0 1px 1px; }
.arrows { display: flex; gap: 18px; margin: 6px 0 0 auto; }
.arrows svg { width: 6px; height: 10px; }
.status { position: relative; flex: none; display: flex; height: 28px; padding: 3px 0 2px; line-height: 23px; }
.status > span { flex: none; border-left: 1px solid #a0a0a0; padding-left: 5px; white-space: nowrap; }
.status .help { flex: 1; border: 0; padding: 0; margin-left: -2px; }
.status .s1 { width: 156px; } .status .s2 { width: 144px; } .status .s3 { width: 98px; } .status .s4 { width: 95px; } .status .s5 { width: 92px; }
.status .net { display: flex; gap: 5px; width: 195px; padding-left: 4px; }
.signal { width: 32px; height: 16px; margin-top: 4px; }
.grip { position: absolute; right: 0; bottom: 0; width: 16px; height: 16px; }

.ime { position: absolute; left: 1438px; bottom: 88px; display: flex; align-items: center; gap: 10px; width: 271px; height: 37px; padding: 0 10px; border-radius: 8px; background: #fff; box-shadow: 0 1px 4px #0004; }
.ime > svg { width: 24px; height: 24px; }
.ime i { width: 1px; height: 24px; background: #ccc; }
.ime .wide { margin-left: 4px; }
.pen { fill: none; stroke: #1a1a1a; stroke-width: 2; }
.ai { position: relative; flex: none; font: 23px/32px "Open Sans", sans-serif; color: #1a1a1a; }
.ai svg { position: absolute; right: -1px; top: 4px; width: 8px; height: 8px; background: #fff; }

.wallpaper { width: 100%; height: 10px; }
.taskbar { flex: none; display: grid; grid-template-columns: 1fr auto 1fr; align-items: center; height: 59px; padding-right: 15px; border-top: 1px solid #c3cbdd; background: linear-gradient(90deg, #e0ecf6 0, #e0ebf7 15%, #d5e0f6 26%, #d6e0f4 50%, #d9daee 68%, #e0e9f5 80%, #dfeaf6 100%); }
.pinned { grid-column: 2; display: flex; gap: 7px; }
.pinned button { position: relative; display: flex; align-items: center; justify-content: center; width: 48px; height: 48px; border-radius: 5px; }
.pinned svg { width: 30px; height: 30px; }
.pinned .on { background: #eef1fa; box-shadow: 0 0 0 1px #dfe3ef; }
.run::after { content: ""; position: absolute; left: 20px; bottom: 0; width: 8px; height: 4px; border-radius: 2px; background: #7e8490; }
.run.on::after { left: 14px; width: 20px; background: #0a74d4; }
.tray { justify-self: end; display: flex; align-items: center; gap: 10px; margin-right: 6px; }
.tray > svg { width: 20px; height: 20px; }
.thin { fill: none; stroke: #222; stroke-width: 1.500; }
.zh { fill: none; margin-left: 5px; }
.tray .sogou { margin: 0 17px 0 18px; }
.clock { display: flex; flex-direction: column; align-items: flex-end; width: 78px; font-size: 14px; line-height: 20px; color: #1c1c1c; }
.badge { width: 24px; height: 24px; margin-left: -4px; border-radius: 12px; background: #0067c0; color: #fff; font-size: 12px; line-height: 24px; text-align: center; }
</style>
